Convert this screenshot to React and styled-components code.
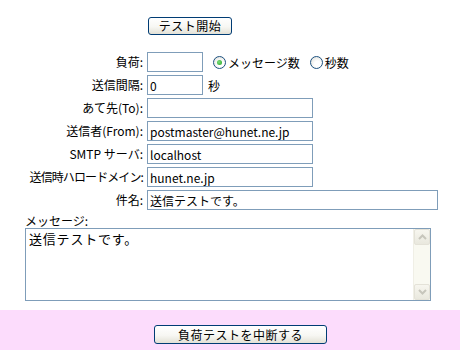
import React from "react";
import styled, { createGlobalStyle } from "styled-components";

const GlobalStyle = createGlobalStyle`
  html, body {
    margin: 0;
    padding: 0;
    background: #ffffff;
  }
  body {
    font-family: "Noto Sans CJK JP", "Noto Sans", sans-serif;
    font-size: 12px;
    color: #000;
  }
`;

const Page = styled.div`
  width: 460px;
  height: 350px;
  display: flex;
  flex-direction: column;
  overflow: hidden;
`;

const Main = styled.div`
  height: 310px;
  display: flex;
  flex-direction: column;
`;

const StartBar = styled.div`
  padding: 17px 0 0 148px;
  height: 18px;
`;

const XpButton = styled.button`
  box-sizing: border-box;
  width: ${(p) => p.$w}px;
  height: ${(p) => p.$h}px;
  padding: 0;
  border: 1px solid #003c74;
  border-radius: 3px;
  background: linear-gradient(#ffffff 0%, #f7f7f3 55%, #e3e1d6 100%);
  font-family: "Noto Sans CJK JP", sans-serif;
  font-size: 12px;
  line-height: 1;
  color: #000;
  display: flex;
  align-items: center;
  justify-content: center;
  letter-spacing: 0.5px;
`;

const Form = styled.div`
  margin-top: 17px;
  padding-left: 25px;
  display: grid;
  grid-template-columns: 120px auto;
  grid-auto-rows: 20px;
  column-gap: 2px;
  row-gap: 3px;
`;

const Label = styled.div`
  text-align: right;
  line-height: 20px;
  white-space: nowrap;
  padding-right: 2px;
  letter-spacing: ${(p) => (p.$tight ? "-0.9px" : "0")};
`;

const Field = styled.div`
  display: flex;
  align-items: center;
`;

const TextBox = styled.input`
  box-sizing: border-box;
  width: ${(p) => p.$w}px;
  height: 20px;
  border: 1px solid #7f9db9;
  padding: 0 2px;
  margin: 0;
  font-family: "Noto Sans CJK JP", sans-serif;
  font-size: 12px;
  color: #000;
  background: #fff;
  outline: none;
`;

const Unit = styled.span`
  margin-left: 5px;
`;

const RadioGroup = styled.div`
  display: flex;
  align-items: center;
  margin-left: 10px;
`;

const RadioItem = styled.label`
  display: flex;
  align-items: center;
  margin-right: ${(p) => (p.$last ? 0 : 10)}px;
`;

const RadioDot = styled.span`
  box-sizing: border-box;
  width: 13px;
  height: 13px;
  border-radius: 50%;
  border: 1px solid #1c5180;
  background: radial-gradient(circle at 60% 65%, #ffffff 30%, #dcdcd5 100%);
  display: flex;
  align-items: center;
  justify-content: center;
  margin-right: 2px;
  &::after {
    content: "";
    width: 5px;
    height: 5px;
    border-radius: 50%;
    background: ${(p) => (p.$checked ? "radial-gradient(circle at 40% 40%, #7be07b, #21a121)" : "transparent")};
  }
`;

const MessageLabel = styled.div`
  margin: 3px 0 0 25px;
  line-height: 15px;
  height: 15px;
`;

const MemoBox = styled.div`
  box-sizing: border-box;
  margin-left: 25px;
  width: 406px;
  height: 73px;
  border: 1px solid #7f9db9;
  display: flex;
  background: #fff;
`;

const Memo = styled.textarea`
  flex: 1;
  border: none;
  outline: none;
  resize: none;
  margin: 0;
  padding: 1px 3px;
  font-family: "Noto Sans CJK JP", monospace;
  font-size: 13px;
  letter-spacing: 0.8px;
  line-height: 17px;
  overflow: hidden;
  color: #000;
`;

const ScrollBar = styled.div`
  width: 16px;
  background: #f9f9f1;
  border-left: 1px solid #f0efe6;
  display: flex;
  flex-direction: column;
  justify-content: space-between;
`;

const ScrollButton = styled.div`
  box-sizing: border-box;
  height: 16px;
  border: 1px solid #e4e2d8;
  border-radius: 2px;
  background: linear-gradient(#f7f6ef, #e9e8de);
  display: flex;
  align-items: center;
  justify-content: center;
`;

const Footer = styled.div`
  height: 40px;
  background: #fcdcfc;
  padding: 15px 0 0 154px;
  box-sizing: border-box;
`;

const Chevron = ({ down }) => (
  <svg width="9" height="6" viewBox="0 0 9 6">
    <polyline
      points={down ? "1,1 4.5,4.5 8,1" : "1,5 4.5,1.5 8,5"}
      fill="none"
      stroke="#c7c6bc"
      strokeWidth="2"
    />
  </svg>
);

const rows = [
  { label: "あて先(To):", value: "", w: 166 },
  { label: "送信者(From):", value: "postmaster@hunet.ne.jp", w: 166 },
  { label: "SMTP サーバ:", value: "localhost", w: 166 },
  { label: "送信時ハロードメイン:", value: "hunet.ne.jp", w: 166, tight: true },
  { label: "件名:", value: "送信テストです。", w: 291 },
];

export default function App() {
  return (
    <>
      <GlobalStyle />
      <Page>
        <Main>
          <StartBar>
            <XpButton $w={84} $h={18}>テスト開始</XpButton>
          </StartBar>
          <Form>
            <Label>負荷:</Label>
            <Field>
              <TextBox $w={56} defaultValue="" />
              <RadioGroup>
                <RadioItem>
                  <RadioDot $checked />
                  メッセージ数
                </RadioItem>
                <RadioItem $last>
                  <RadioDot />
                  秒数
                </RadioItem>
              </RadioGroup>
            </Field>
            <Label>送信間隔:</Label>
            <Field>
              <TextBox $w={56} defaultValue="0" />
              <Unit>秒</Unit>
            </Field>
            {rows.map((r) => (
              <React.Fragment key={r.label}>
                <Label $tight={r.tight}>{r.label}</Label>
                <Field>
                  <TextBox $w={r.w} defaultValue={r.value} />
                </Field>
              </React.Fragment>
            ))}
          </Form>
          <MessageLabel>メッセージ:</MessageLabel>
          <MemoBox>
            <Memo defaultValue="送信テストです。" />
            <ScrollBar>
              <ScrollButton>
                <Chevron />
              </ScrollButton>
              <ScrollButton>
                <Chevron down />
              </ScrollButton>
            </ScrollBar>
          </MemoBox>
        </Main>
        <Footer>
          <XpButton $w={173} $h={19}>負荷テストを中断する</XpButton>
        </Footer>
      </Page>
    </>
  );
}
